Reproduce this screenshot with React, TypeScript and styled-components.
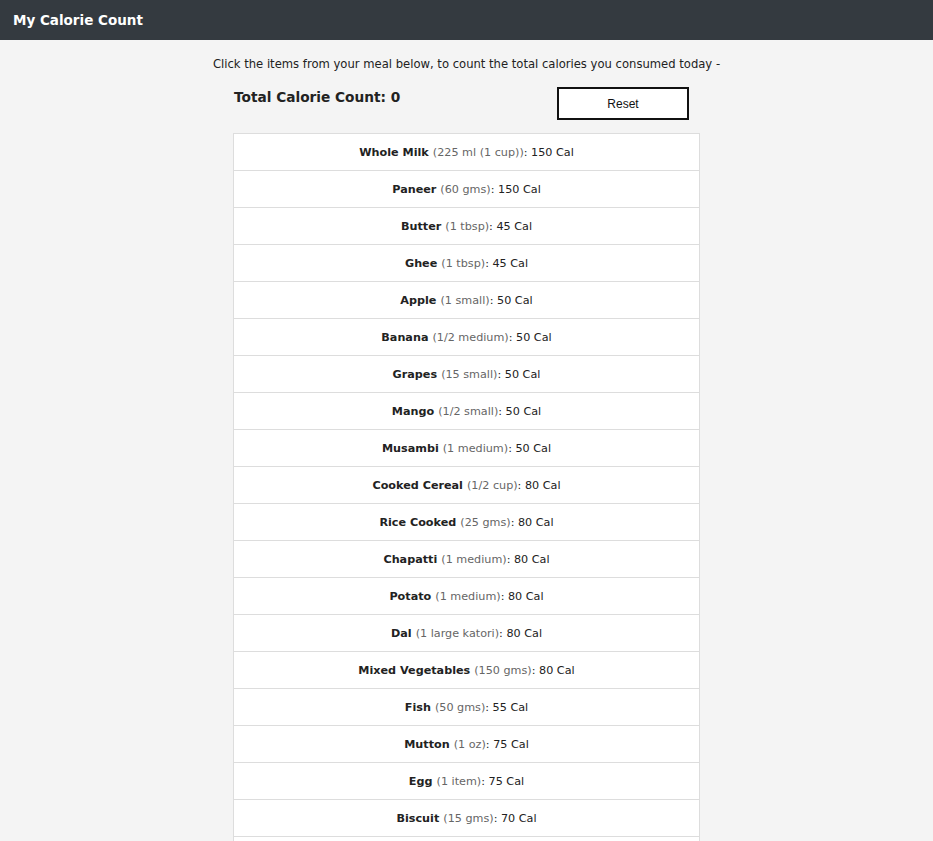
import styled, { createGlobalStyle } from "styled-components";
import { useState } from "react";

const GlobalStyle = createGlobalStyle`
  body {
    margin: 0;
    background-color: #f4f4f4;
    font-family: "DejaVu Sans", sans-serif;
    color: #222;
  }
`;

const Header = styled.div`
  height: 40px;
  background-color: #343a40;
  color: #fff;
  display: flex;
  align-items: center;
  padding: 0 13px;
  font-size: 13.5px;
  font-weight: 700;
`;

const Intro = styled.p`
  margin: 17px 0 0 0;
  text-align: center;
  font-size: 11.6px;
  white-space: nowrap;
`;

const Main = styled.div`
  width: 467px;
  margin: 0 auto;
`;

const TopRow = styled.div`
  display: flex;
  justify-content: space-between;
  align-items: flex-start;
  margin-top: 16px;
  padding-right: 11px;
  padding-left: 1px;
`;

const Total = styled.h3`
  margin: 2px 0 0 0;
  font-size: 13.7px;
  font-weight: 700;
`;

const ResetButton = styled.button`
  width: 132px;
  height: 33px;
  background: #fff;
  border: 2px solid #111;
  font-family: "Liberation Sans", Arial, sans-serif;
  font-size: 12px;
  color: #111;
  cursor: pointer;
`;

const List = styled.ul`
  list-style: none;
  margin: 13px 0 0 0;
  padding: 0;
  border: 1px solid #ddd;
  border-bottom: none;
  background: #fff;
`;

const Item = styled.li`
  height: 36px;
  border-bottom: 1px solid #ddd;
  display: flex;
  align-items: center;
  justify-content: center;
  font-size: 11.2px;
  cursor: pointer;
`;

const Name = styled.b`
  font-weight: 700;
  margin-right: 4px;
`;

const Portion = styled.span`
  color: #666;
`;

const foods = [
  ["Whole Milk", "225 ml (1 cup)", 150],
  ["Paneer", "60 gms", 150],
  ["Butter", "1 tbsp", 45],
  ["Ghee", "1 tbsp", 45],
  ["Apple", "1 small", 50],
  ["Banana", "1/2 medium", 50],
  ["Grapes", "15 small", 50],
  ["Mango", "1/2 small", 50],
  ["Musambi", "1 medium", 50],
  ["Cooked Cereal", "1/2 cup", 80],
  ["Rice Cooked", "25 gms", 80],
  ["Chapatti", "1 medium", 80],
  ["Potato", "1 medium", 80],
  ["Dal", "1 large katori", 80],
  ["Mixed Vegetables", "150 gms", 80],
  ["Fish", "50 gms", 55],
  ["Mutton", "1 oz", 75],
  ["Egg", "1 item", 75],
  ["Biscuit", "15 gms", 70],
  ["Bread", "1 slice", 70],
  ["Samosa", "1 piece", 250],
] as const;

function App() {
  const [total, setTotal] = useState(0);
  return (
    <>
      <GlobalStyle />
      <Header>My Calorie Count</Header>
      <Intro>
        Click the items from your meal below, to count the total calories you
        consumed today -
      </Intro>
      <Main>
        <TopRow>
          <Total>Total Calorie Count: {total}</Total>
          <ResetButton onClick={() => setTotal(0)}>Reset</ResetButton>
        </TopRow>
        <List>
          {foods.map(([name, portion, cal]) => (
            <Item key={name} onClick={() => setTotal((t) => t + cal)}>
              <Name>{name}</Name>
              <Portion>({portion})</Portion>: {cal} Cal
            </Item>
          ))}
        </List>
      </Main>
    </>
  );
}

export default App;
